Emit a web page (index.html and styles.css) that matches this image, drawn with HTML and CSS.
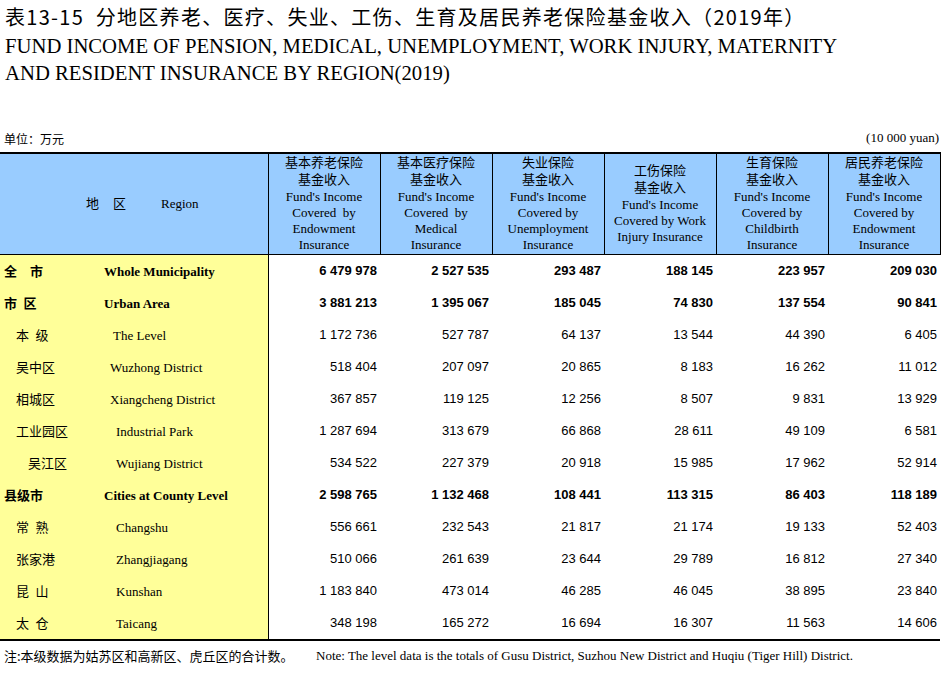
FILE: index.html
```html
<!DOCTYPE html>
<html lang="zh-CN">
<head>
<meta charset="utf-8">
<title>表13-15 分地区养老、医疗、失业、工伤、生育及居民养老保险基金收入(2019年)</title>
<link rel="stylesheet" href="styles.css">
</head>
<body>
<div class="page">
  <h1 class="title-zh">表13-15&nbsp; 分地区养老、医疗、失业、工伤、生育及居民养老保险基金收入（2019年）</h1>
  <h2 class="title-en">FUND INCOME OF PENSION, MEDICAL, UNEMPLOYMENT, WORK INJURY, MATERNITY<br>AND RESIDENT INSURANCE BY REGION(2019)</h2>
  <div class="unit-row">
    <span class="unit-zh">单位：万元</span>
    <span class="unit-en">(10 000 yuan)</span>
  </div>
  <table class="data">
    <colgroup>
      <col class="c-region">
      <col class="c-num"><col class="c-num"><col class="c-num"><col class="c-num"><col class="c-num"><col class="c-num">
    </colgroup>
    <thead>
      <tr>
        <th class="h-region"><span class="hz">地</span><span class="hz hz2">区</span><span class="hen">Region</span></th>
        <th class="h-col"><span class="hzh">基本养老保险<br>基金收入</span><br><span class="hen">Fund's Income<br>Covered&nbsp; by<br>Endowment<br>Insurance</span></th>
        <th class="h-col"><span class="hzh">基本医疗保险<br>基金收入</span><br><span class="hen">Fund's Income<br>Covered&nbsp; by<br>Medical<br>Insurance</span></th>
        <th class="h-col"><span class="hzh">失业保险<br>基金收入</span><br><span class="hen">Fund's Income<br>Covered by<br>Unemployment<br>Insurance</span></th>
        <th class="h-col"><span class="hzh">工伤保险<br>基金收入</span><br><span class="hen">Fund's Income<br>Covered by Work<br>Injury Insurance</span></th>
        <th class="h-col"><span class="hzh">生育保险<br>基金收入</span><br><span class="hen">Fund's Income<br>Covered by<br>Childbirth<br>Insurance</span></th>
        <th class="h-col h-last"><span class="hzh">居民养老保险<br>基金收入</span><br><span class="hen">Fund's Income<br>Covered by<br>Endowment<br>Insurance</span></th>
      </tr>
    </thead>
    <tbody>
      <tr class="total">
        <td class="region"><span class="zh">全　市</span><span class="en">Whole Municipality</span></td>
        <td>6 479 978</td><td>2 527 535</td><td>293 487</td><td>188 145</td><td>223 957</td><td>209 030</td>
      </tr>
      <tr class="total">
        <td class="region"><span class="zh">市&ensp;区</span><span class="en">Urban Area</span></td>
        <td>3 881 213</td><td>1 395 067</td><td>185 045</td><td>74 830</td><td>137 554</td><td>90 841</td>
      </tr>
      <tr>
        <td class="region"><span class="zh ind">本&ensp;级</span><span class="en en-a">The Level</span></td>
        <td>1 172 736</td><td>527 787</td><td>64 137</td><td>13 544</td><td>44 390</td><td>6 405</td>
      </tr>
      <tr>
        <td class="region"><span class="zh ind">吴中区</span><span class="en en-b">Wuzhong District</span></td>
        <td>518 404</td><td>207 097</td><td>20 865</td><td>8 183</td><td>16 262</td><td>11 012</td>
      </tr>
      <tr>
        <td class="region"><span class="zh ind">相城区</span><span class="en en-b">Xiangcheng District</span></td>
        <td>367 857</td><td>119 125</td><td>12 256</td><td>8 507</td><td>9 831</td><td>13 929</td>
      </tr>
      <tr>
        <td class="region"><span class="zh ind">工业园区</span><span class="en en-c">Industrial Park</span></td>
        <td>1 287 694</td><td>313 679</td><td>66 868</td><td>28 611</td><td>49 109</td><td>6 581</td>
      </tr>
      <tr>
        <td class="region"><span class="zh ind2">吴江区</span><span class="en en-c">Wujiang District</span></td>
        <td>534 522</td><td>227 379</td><td>20 918</td><td>15 985</td><td>17 962</td><td>52 914</td>
      </tr>
      <tr class="total">
        <td class="region"><span class="zh">县级市</span><span class="en">Cities at County Level</span></td>
        <td>2 598 765</td><td>1 132 468</td><td>108 441</td><td>113 315</td><td>86 403</td><td>118 189</td>
      </tr>
      <tr>
        <td class="region"><span class="zh ind">常&ensp;熟</span><span class="en en-c">Changshu</span></td>
        <td>556 661</td><td>232 543</td><td>21 817</td><td>21 174</td><td>19 133</td><td>52 403</td>
      </tr>
      <tr>
        <td class="region"><span class="zh ind">张家港</span><span class="en en-c">Zhangjiagang</span></td>
        <td>510 066</td><td>261 639</td><td>23 644</td><td>29 789</td><td>16 812</td><td>27 340</td>
      </tr>
      <tr>
        <td class="region"><span class="zh ind">昆&ensp;山</span><span class="en en-c">Kunshan</span></td>
        <td>1 183 840</td><td>473 014</td><td>46 285</td><td>46 045</td><td>38 895</td><td>23 840</td>
      </tr>
      <tr class="last">
        <td class="region"><span class="zh ind">太&ensp;仓</span><span class="en en-c">Taicang</span></td>
        <td>348 198</td><td>165 272</td><td>16 694</td><td>16 307</td><td>11 563</td><td>14 606</td>
      </tr>
    </tbody>
  </table>
  <div class="note">
    <span class="note-zh">注:本级数据为姑苏区和高新区、虎丘区的合计数。</span>
    <span class="note-en">Note: The level data is the totals of Gusu District, Suzhou New District and Huqiu (Tiger Hill) District.</span>
  </div>
</div>
</body>
</html>
```
FILE: styles.css
```css
html, body {
  margin: 0;
  padding: 0;
  background: #ffffff;
  color: #000000;
}

.page {
  width: 941px;
  padding-top: 5px;
}

.title-zh {
  margin: 0;
  padding-left: 5px;
  font-family: "Noto Sans CJK SC", "Liberation Sans", sans-serif;
  font-weight: 400;
  font-size: 20px;
  letter-spacing: 1.3px;
  line-height: 24px;
  white-space: nowrap;
}

.title-en {
  margin: 4px 0 0 0;
  padding-left: 5px;
  font-family: "Liberation Serif", serif;
  font-weight: 400;
  font-size: 20.7px;
  line-height: 27px;
  white-space: nowrap;
}

.unit-row {
  display: flex;
  justify-content: space-between;
  align-items: center;
  margin-top: 43px;
  height: 16px;
  padding: 0 2px 0 4px;
}

.unit-zh {
  font-family: "Noto Sans CJK SC", sans-serif;
  font-size: 12px;
}

.unit-en {
  font-family: "Liberation Serif", serif;
  font-size: 13px;
}

.data {
  margin-top: 6px;
  width: 940px;
  border-collapse: collapse;
  table-layout: fixed;
}

.c-region { width: 268px; }
.c-num { width: 112px; }

.data thead th {
  background: #99ccff;
  border-top: 2px solid #000;
  border-bottom: 1px solid #000;
  border-right: 1px solid #000;
  height: 98px;
  padding: 0;
  font-weight: 400;
  vertical-align: middle;
  text-align: center;
  line-height: 16.3px;
  font-size: 13px;
}

.data thead th.h-region {
  text-align: left;
  padding-left: 86px;
}

.hz {
  font-family: "Noto Sans CJK SC", sans-serif;
  font-size: 13px;
}

.hz2 {
  margin-left: 14px;
  margin-right: 35px;
}

.hzh {
  font-family: "Noto Sans CJK SC", sans-serif;
  font-size: 13px;
}

.hen {
  font-family: "Liberation Serif", serif;
  font-size: 13px;
}

.data tbody td {
  height: 32px;
  padding: 0 3px 0 0;
  text-align: right;
  font-family: "Liberation Sans", Arial, sans-serif;
  font-size: 13px;
  vertical-align: middle;
}

.data tbody tr.last td {
  border-bottom: 2px solid #000;
}

.data tbody td.region {
  background: #ffff99;
  border-right: 1px solid #000;
  text-align: left;
  padding: 0;
  white-space: nowrap;
}

.region .zh {
  display: inline-block;
  box-sizing: border-box;
  width: 104px;
  padding-left: 4px;
  font-family: "Noto Sans CJK SC", sans-serif;
  font-size: 13px;
}

.region .zh.ind { padding-left: 16px; }
.region .zh.ind2 { padding-left: 28px; }

.region .en {
  font-family: "Liberation Serif", serif;
  font-size: 13px;
}

.region .en-a { padding-left: 9px; }
.region .en-b { padding-left: 6px; }
.region .en-c { padding-left: 12px; }

.total td {
  font-weight: 700;
}

.total td.region .zh {
  font-weight: 700;
}

.note {
  display: flex;
  margin-top: 7px;
  height: 16px;
  align-items: center;
}

.note-zh {
  box-sizing: border-box;
  width: 316px;
  padding-left: 4px;
  font-family: "Noto Sans CJK SC", sans-serif;
  font-size: 13px;
}

.note-en {
  font-family: "Liberation Serif", serif;
  font-size: 13px;
  white-space: nowrap;
}
```
